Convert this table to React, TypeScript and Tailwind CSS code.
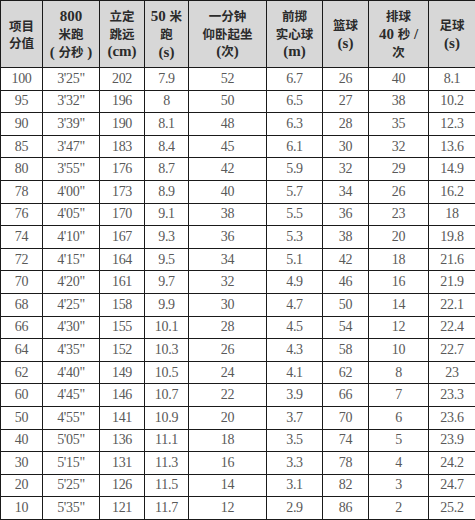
import React from 'react';

const rows: string[][] = [
  ['100', `3'25"`, '202', '7.9', '52', '6.7', '26', '40', '8.1'],
  ['95', `3'32"`, '196', '8', '50', '6.5', '27', '38', '10.2'],
  ['90', `3'39"`, '190', '8.1', '48', '6.3', '28', '35', '12.3'],
  ['85', `3'47"`, '183', '8.4', '45', '6.1', '30', '32', '13.6'],
  ['80', `3'55"`, '176', '8.7', '42', '5.9', '32', '29', '14.9'],
  ['78', `4'00"`, '173', '8.9', '40', '5.7', '34', '26', '16.2'],
  ['76', `4'05"`, '170', '9.1', '38', '5.5', '36', '23', '18'],
  ['74', `4'10"`, '167', '9.3', '36', '5.3', '38', '20', '19.8'],
  ['72', `4'15"`, '164', '9.5', '34', '5.1', '42', '18', '21.6'],
  ['70', `4'20"`, '161', '9.7', '32', '4.9', '46', '16', '21.9'],
  ['68', `4'25"`, '158', '9.9', '30', '4.7', '50', '14', '22.1'],
  ['66', `4'30"`, '155', '10.1', '28', '4.5', '54', '12', '22.4'],
  ['64', `4'35"`, '152', '10.3', '26', '4.3', '58', '10', '22.7'],
  ['62', `4'40"`, '149', '10.5', '24', '4.1', '62', '8', '23'],
  ['60', `4'45"`, '146', '10.7', '22', '3.9', '66', '7', '23.3'],
  ['50', `4'55"`, '141', '10.9', '20', '3.7', '70', '6', '23.6'],
  ['40', `5'05"`, '136', '11.1', '18', '3.5', '74', '5', '23.9'],
  ['30', `5'15"`, '131', '11.3', '16', '3.3', '78', '4', '24.2'],
  ['20', `5'25"`, '126', '11.5', '14', '3.1', '82', '3', '24.7'],
  ['10', `5'35"`, '121', '11.7', '12', '2.9', '86', '2', '25.2'],
];

const headers: string[][] = [
  ['项目', '分值'],
  ['800', '米跑', '( 分秒 )'],
  ['立定', '跳远', '(cm)'],
  ['50 米', '跑', '(s)'],
  ['一分钟', '仰卧起坐', '(次)'],
  ['前掷', '实心球', '(m)'],
  ['篮球', '(s)'],
  ['排球', '40 秒 /', '次'],
  ['足球', '(s)'],
];

// CJK runs get a smaller size than the latin runs, like the printed table
function HeaderLine({ text }: { text: string }) {
  const parts = text.split(/([\u4e00-\u9fff]+)/).filter(Boolean);
  return (
    <div>
      {parts.map((p, i) =>
        /[\u4e00-\u9fff]/.test(p) ? (
          <span key={i} className="text-[12.5px] font-['Noto_Sans_CJK_SC',sans-serif]">{p}</span>
        ) : (
          <span key={i} className="text-[15px] font-['Liberation_Serif',serif]">{p}</span>
        )
      )}
    </div>
  );
}

export default function App() {
  return (
    <div className="w-[475px] h-[520px] bg-white overflow-hidden">
      <table className="table-fixed border-collapse w-[475px] font-['Liberation_Serif','Noto_Sans_CJK_SC',serif]">
        <colgroup>
          <col className="w-[42px]" />
          <col className="w-[57px]" />
          <col className="w-[45px]" />
          <col className="w-[44px]" />
          <col className="w-[78px]" />
          <col className="w-[56px]" />
          <col className="w-[46px]" />
          <col className="w-[60px]" />
          <col className="w-[47px]" />
        </colgroup>
        <thead>
          <tr className="h-[67px] bg-[#d7d7d7]">
            {headers.map((lines, i) => (
              <th
                key={i}
                className="border border-[#1a1a1a] p-0 text-center align-middle leading-[17.5px] font-bold text-[#2b2b2b]"
              >
                {lines.map((l, j) => (
                  <HeaderLine key={j} text={l} />
                ))}
              </th>
            ))}
          </tr>
        </thead>
        <tbody>
          {rows.map((r, i) => (
            <tr key={i} className="h-[22.6px]">
              {r.map((c, j) => (
                <td
                  key={j}
                  className="border border-[#1a1a1a] p-0 text-center align-middle text-[14px] tracking-[-0.3px] leading-[20px] text-[#595959]"
                >
                  {c}
                </td>
              ))}
            </tr>
          ))}
        </tbody>
      </table>
    </div>
  );
}
